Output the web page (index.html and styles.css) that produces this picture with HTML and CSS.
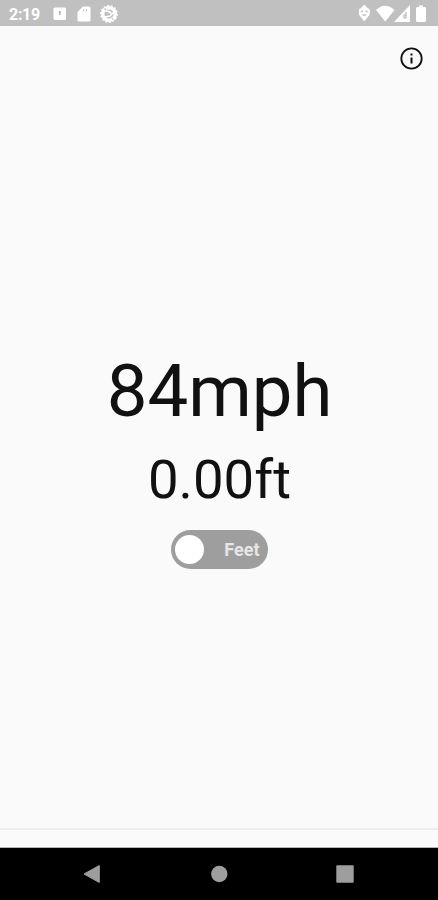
FILE: index.html
```
<!DOCTYPE html>
<html lang="en">
<head>
  <meta charset="utf-8">
  <title>Speed</title>
  <link rel="stylesheet" href="styles.css">
</head>
<body>

<div class="status-bar">
  <span class="time">2:19</span>
  <svg class="left-icons" width="70" height="26" viewBox="0 0 70 26">
    <rect x="3.500" y="7.500" width="12.500" height="12.500" rx="1.500" fill="#fff"/>
    <path d="M9.800 11v4M8.800 12.500h2" stroke="#b0b0b0" stroke-width="1.300"/>
    <path d="M33 6.500h6q1.500 0 1.500 1.500v12q0 1.500-1.500 1.500h-10q-1.500 0-1.500-1.500v-8z" fill="#fff"/>
    <path d="M33.500 9v2.500M36.500 9v2.500" stroke="#c8c8c8" stroke-width="1"/>
    <circle cx="59" cy="14" r="6.300" fill="none" stroke="#fff" stroke-width="3.400"/>
    <circle cx="59" cy="14" r="8.300" fill="none" stroke="#fff" stroke-width="1.200" stroke-dasharray="2 1.700"/>
    <path d="M54 10.500l6 1.500 2 3M64 12l-4 4-5 1" fill="none" stroke="#fff" stroke-width="1.500"/>
    <path d="M54.500 8.500l1.500 1.500M62 18.500l1.500 1" stroke="#c0c0c0" stroke-width="1.200"/>
  </svg>
  <svg class="right-icons" width="78" height="26" viewBox="0 0 78 26">
    <path d="M3.500 9.500l2-1 2.800-3 2.800 3 2 1v5l-2 2.500-2.800 3.500-2.800-3.500-2-2.500z" fill="#fff" stroke="#fff" stroke-width="1.200" stroke-linejoin="round"/>
    <path d="M5 11.500h2M9.600 11.500h2M6.500 14.500l1.800 1 1.800-1" fill="none" stroke="#bcbcbc" stroke-width="1.300"/>
    <path d="M20 10q9-8.500 18.500 0l-9.200 11.500z" fill="#fff"/>
    <path d="M54 5v17H38z" fill="#fff"/>
    <path d="M50 12v6M50 15h-2v3h2" fill="none" stroke="#b8b8b8" stroke-width="1.200"/>
    <path d="M63 5.500h4v1.500h1.500q1.500 0 1.500 1.500v12q0 1.500-1.500 1.500h-7q-1.500 0-1.500-1.500v-12q0-1.500 1.500-1.500H63z" fill="#fff"/>
  </svg>
</div>

<div class="main">
  <div class="toolbar">
    <svg width="24" height="24" viewBox="0 0 24 24">
      <circle cx="12.500" cy="12.500" r="10.200" fill="none" stroke="#111" stroke-width="1.800"/>
      <path d="M11.500 7.500h2v2h-2zM11.500 11.500h2v6h-2z" fill="#111"/>
    </svg>
  </div>

  <div class="readout">
    <div class="speed">84mph</div>
    <div class="distance">0.00ft</div>
    <div class="switch">
      <span class="knob"></span>
      <span class="unit">Feet</span>
    </div>
  </div>
</div>

<div class="bottom-strip"></div>

<div class="nav-bar">
  <svg width="18" height="20" viewBox="0 0 18 20">
    <path d="M1 10L16.300 1.500v17z" fill="#9e9e9e" stroke="#9e9e9e" stroke-linejoin="round"/>
  </svg>
  <svg width="18" height="20" viewBox="0 0 18 20">
    <circle cx="9.300" cy="10" r="8.200" fill="#9e9e9e"/>
  </svg>
  <svg width="18" height="20" viewBox="0 0 18 20">
    <rect x=".3" y="1.300" width="17.400" height="17.400" rx="1" fill="#9e9e9e"/>
  </svg>
</div>

</body>
</html>
```
FILE: styles.css
```
*{margin:0;padding:0;box-sizing:border-box;}
body{
	display: flex;
	flex-direction: column;
	height: 900px;
	overflow: hidden;
	background: #fafafa;
	color: #111;
	font-family: Roboto, "Liberation Sans", sans-serif;
}
svg{
	display: block;
}

/* status bar */
.status-bar{
	display: flex;
	height: 26px;
	padding-left: 9px;
	background: #c0c0c0;
	color: #fff;
}
.time{
	width: 41px;
	font-size: 16px;
	font-weight: 700;
	letter-spacing: -.3px;
	line-height: 30px;
}
.right-icons{
	margin-left: auto;
	margin-right: 4px;
}

/* content */
.main{
	flex: 1;
	border-bottom: 2px solid #ececec;
}
.toolbar{
	display: flex;
	justify-content: flex-end;
	height: 323px;
	padding: 20px 15px 0 0;
}
.readout{
	display: flex;
	flex-direction: column;
	align-items: center;
}
.speed{
	padding-left: 1px;
	font-size: 72.5px;
	line-height: 86px;
}
.distance{
	margin-top: 12px;
	padding-left: 1px;
	font-size: 54.5px;
	line-height: 65px;
}
.switch{
	display: flex;
	align-items: center;
	justify-content: space-between;
	width: 97px;
	height: 39px;
	margin-top: 18px;
	padding: 0 8px 0 4px;
	border-radius: 20px;
	background: #9e9e9e;
}
.knob{
	width: 29px;
	height: 29px;
	border-radius: 50%;
	background: #fff;
}
.unit{
	color: #e6e6e6;
	font-size: 18px;
	font-weight: 700;
}

/* system navigation */
.bottom-strip{
	height: 18px;
	border-bottom: 1px solid #b4b4b4;
}
.nav-bar{
	display: flex;
	align-items: center;
	justify-content: space-between;
	height: 52px;
	padding: 0 84px 0 83px;
	background: #000;
}
```
